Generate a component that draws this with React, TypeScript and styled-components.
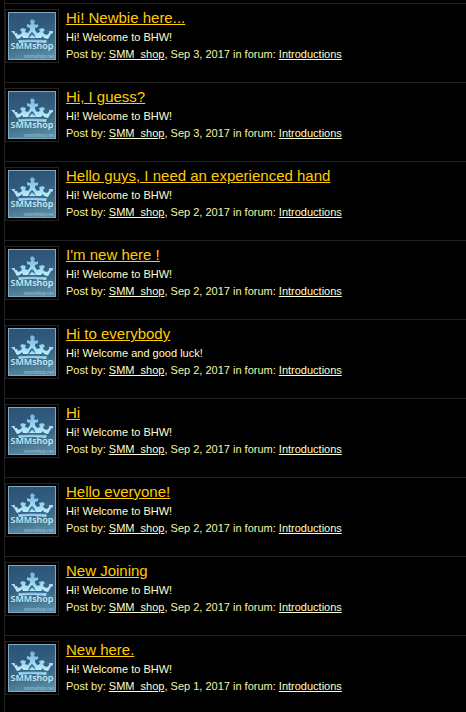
import React from "react";
import styled, { createGlobalStyle } from "styled-components";

const GlobalStyle = createGlobalStyle`
  body {
    margin: 0;
    background: #000;
    font-family: "Liberation Sans", Arial, Helvetica, sans-serif;
  }
`;

const Panel = styled.main`
  box-sizing: border-box;
  min-height: 100vh;
  margin-left: 4px;
  padding-top: 3px;
  border-left: 1px solid #222;
  background: #000;
`;

const ResultList = styled.ol`
  margin: 0;
  padding: 0;
  list-style: none;
`;

const Result = styled.li`
  display: flex;
  align-items: flex-start;
  gap: 7px;
  padding: 5px 0 19px;
  border-top: 1px solid #222;
`;

const AvatarLink = styled.a`
  flex: none;
  display: block;
  padding: 2px;
  border: 1px solid #222;
`;

const AvatarArt = styled.svg`
  display: block;
  width: 48px;
  height: 48px;
`;

const Details = styled.div`
  min-width: 0;
`;

const Title = styled.h3`
  margin: 0;
  font-size: 15px;
  font-weight: 400;
  line-height: 18px;
`;

const TitleLink = styled.a`
  color: #ffcc00;
  text-decoration: underline;
`;

const Snippet = styled.p`
  margin: 0;
  padding-top: 2px;
  font-size: 11px;
  line-height: 17px;
  color: #ffffcc;
`;

const Meta = styled.p`
  margin: 0;
  font-size: 11px;
  line-height: 17px;
  color: #f5f5a3;
`;

const MetaLink = styled.a`
  color: #ffffcc;
  text-decoration: underline;
`;

type Post = { title: string; snippet: string; date: string };

const welcome = "Hi! Welcome to BHW!";

const posts: Post[] = [
  { title: "Hi! Newbie here...", snippet: welcome, date: "Sep 3, 2017" },
  { title: "Hi, I guess?", snippet: welcome, date: "Sep 3, 2017" },
  { title: "Hello guys, I need an experienced hand", snippet: welcome, date: "Sep 2, 2017" },
  { title: "I'm new here !", snippet: welcome, date: "Sep 2, 2017" },
  { title: "Hi to everybody", snippet: "Hi! Welcome and good luck!", date: "Sep 2, 2017" },
  { title: "Hi", snippet: welcome, date: "Sep 2, 2017" },
  { title: "Hello everyone!", snippet: welcome, date: "Sep 2, 2017" },
  { title: "New Joining", snippet: welcome, date: "Sep 2, 2017" },
  { title: "New here.", snippet: welcome, date: "Sep 1, 2017" },
];

function Avatar({ id }: { id: string }) {
  return (
    <AvatarArt viewBox="0 0 48 48" aria-hidden="true">
      <defs>
        <linearGradient id={`${id}-bg`} x1="0" y1="0" x2="0.2" y2="1">
          <stop offset="0" stopColor="#2c5273" />
          <stop offset="0.35" stopColor="#30597b" />
          <stop offset="0.7" stopColor="#3c6986" />
          <stop offset="1" stopColor="#5687a0" />
        </linearGradient>
        <linearGradient id={`${id}-crown`} x1="0" y1="0" x2="0" y2="1">
          <stop offset="0" stopColor="#6fb0e0" />
          <stop offset="0.6" stopColor="#9bd8f3" />
          <stop offset="1" stopColor="#c3f0fb" />
        </linearGradient>
      </defs>
      <rect width="48" height="48" fill={`url(#${id}-bg)`} />
      <rect x="0.5" y="0.5" width="47" height="47" fill="none" stroke="#7eaac2" />
      <g fill={`url(#${id}-crown)`}>
        <path d="M3 19 L7 19 L7 21 L9 21 L10 23 L13 22 L14 20 L12 18 L14 16 L18 17 L17 20 L20 21 L22 18 L22 16 L19 15 L19 12 L22 13 L23 12 L22 9 L24 7 L27 9 L26 12 L28 13 L30 12 L30 15 L27 16 L27 18 L29 21 L32 20 L31 17 L35 16 L37 18 L35 20 L36 22 L39 23 L41 21 L41 19 L45 19 L45 21 L43 22 L40 27 L36 26 L35 24 L33 26 L28 26 L26 22 L24 20 L22 22 L20 26 L15 26 L14 24 L12 26 L9 27 L6 22 Z" />
        <path d="M21 26 L24 22 L28 26 Z" />
        <path d="M10 28 Q24 27 39 28 L38 31 Q24 29 11 31 Z" />
      </g>
      <text
        x="24"
        y="37"
        textAnchor="middle"
        fontFamily="Noto Sans, sans-serif"
        fontSize="9"
        fontWeight="600"
        fill="#c4e8f3"
      >
        SMMshop
      </text>
      <text
        x="46"
        y="46"
        textAnchor="end"
        fontFamily="Liberation Sans, sans-serif"
        fontSize="5"
        fill="#9cc6d6"
      >
        smmshop.net
      </text>
    </AvatarArt>
  );
}

export default function App() {
  return (
    <>
      <GlobalStyle />
      <Panel>
        <ResultList>
          {posts.map((post, index) => (
            <Result key={post.title}>
              <AvatarLink href="#member" aria-label="SMM_shop">
                <Avatar id={`avatar-${index}`} />
              </AvatarLink>
              <Details>
                <Title>
                  <TitleLink href="#post">{post.title}</TitleLink>
                </Title>
                <Snippet>{post.snippet}</Snippet>
                <Meta>
                  Post by: <MetaLink href="#member">SMM_shop</MetaLink>, {post.date} in forum:{" "}
                  <MetaLink href="#forum">Introductions</MetaLink>
                </Meta>
              </Details>
            </Result>
          ))}
        </ResultList>
      </Panel>
    </>
  );
}
